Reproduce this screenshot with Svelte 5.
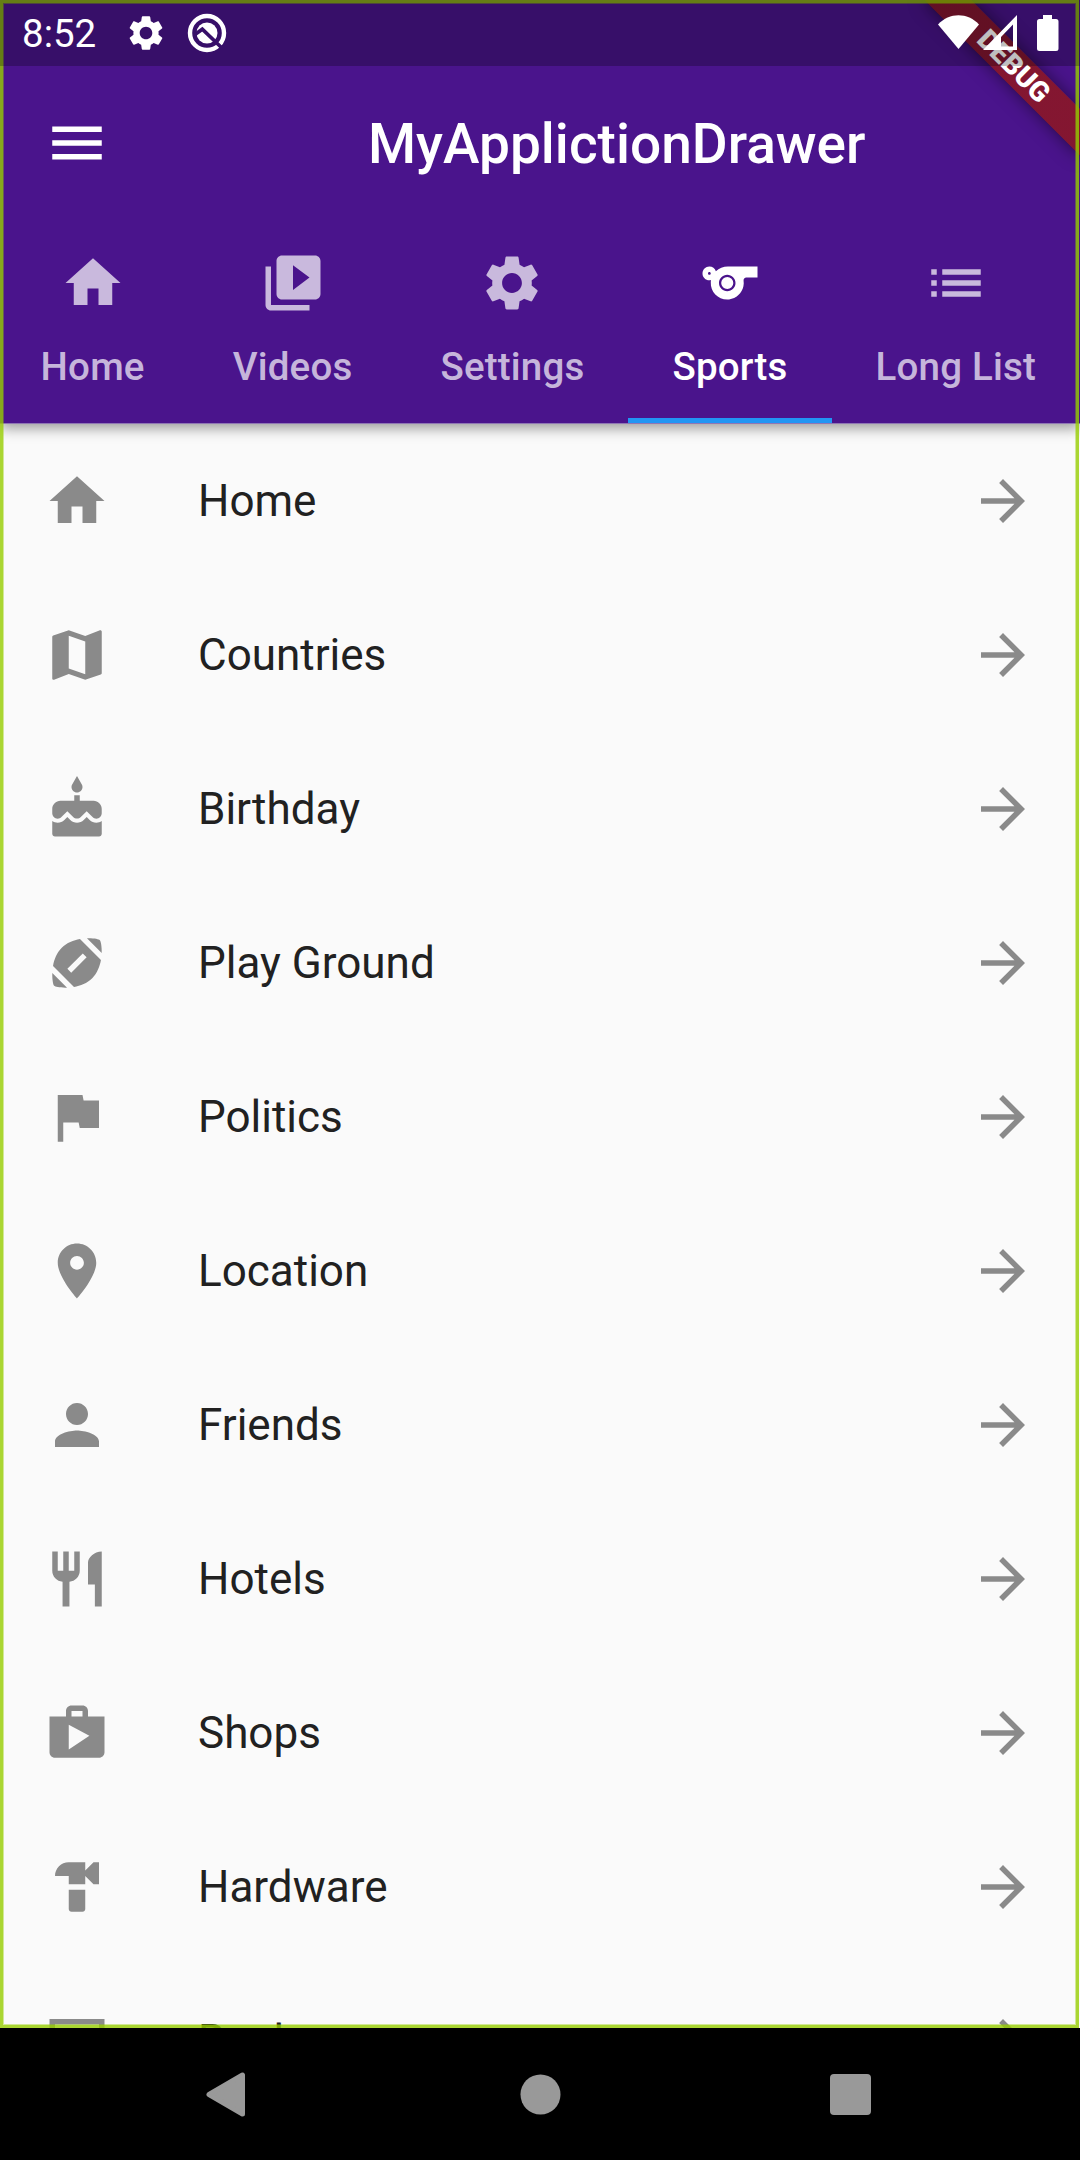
<script>
  const gear =
    'M19.14 12.94c.04-.3.06-.61.06-.94 0-.32-.02-.64-.07-.94l2.03-1.58c.18-.14.23-.41.12-.61l-1.92-3.32c-.12-.22-.37-.29-.59-.22l-2.39.96c-.5-.38-1.03-.7-1.62-.94l-.36-2.54c-.04-.24-.24-.41-.48-.41h-3.84c-.24 0-.43.17-.47.41l-.36 2.54c-.59.24-1.13.57-1.62.94l-2.39-.96c-.22-.08-.47 0-.59.22L2.74 8.87c-.12.21-.08.47.12.61l2.03 1.58c-.05.3-.09.63-.09.94s.02.64.07.94l-2.03 1.58c-.18.14-.23.41-.12.61l1.92 3.32c.12.22.37.29.59.22l2.39-.96c.5.38 1.03.7 1.62.94l.36 2.54c.05.24.24.41.48.41h3.84c.24 0 .44-.17.47-.41l.36-2.54c.59-.24 1.13-.56 1.62-.94l2.39.96c.22.08.47 0 .59-.22l1.92-3.32c.12-.22.07-.47-.12-.61l-2.01-1.58zM12 15.6c-1.98 0-3.6-1.62-3.6-3.6s1.62-3.6 3.6-3.6 3.6 1.62 3.6 3.6-1.62 3.6-3.6 3.6z';
  const house = 'M10 20v-6h4v6h5v-8h3L12 3 2 12h3v8z';
  const arrow = 'M12 4l-1.41 1.41L16.17 11H4v2h12.17l-5.58 5.59L12 20l8-8z';

  const tabs = [
    { label: 'Home', icon: house },
    {
      label: 'Videos',
      icon: 'M4 6H2v14c0 1.1.9 2 2 2h14v-2H4V6zm16-4H8c-1.1 0-2 .9-2 2v12c0 1.1.9 2 2 2h12c1.1 0 2-.9 2-2V4c0-1.1-.9-2-2-2zm-8 12.5v-9l6 4.5-6 4.5z'
    },
    { label: 'Settings', icon: gear },
    {
      label: 'Sports',
      active: true,
      icon: 'M11.23 6c-1.66 0-3.22.66-4.36 1.73C6.54 6.73 5.61 6 4.5 6 3.12 6 2 7.12 2 8.5S3.12 11 4.5 11c.21 0 .41-.03.61-.08-.05.25-.09.51-.1.78-.18 3.68 2.95 6.68 6.68 6.27 2.55-.28 4.68-2.26 5.19-4.77.15-.71.15-1.4.06-2.06-.09-.6.38-1.13.99-1.13H22V6H11.23zM4.5 9c-.28 0-.5-.22-.5-.5s.22-.5.5-.5.5.22.5.5-.22.5-.5.5zm6.5 6c-1.66 0-3-1.34-3-3s1.34-3 3-3 3 1.34 3 3-1.34 3-3 3zM13.200 12a2.200 2.200 0 1 1-4.400 0a2.200 2.200 0 1 1 4.400 0z'
    },
    {
      label: 'Long List',
      icon: 'M3 13h2v-2H3v2zm0 4h2v-2H3v2zm0-8h2V7H3v2zm4 4h14v-2H7v2zm0 4h14v-2H7v2zM7 7v2h14V7H7z'
    }
  ];

  const rows = [
    { label: 'Home', icon: house },
    {
      label: 'Countries',
      icon: 'M20.5 3l-.16.03L15 5.1 9 3 3.36 4.9c-.21.07-.36.25-.36.48V20.5c0 .28.22.5.5.5l.16-.03L9 18.9l6 2.1 5.64-1.9c.21-.07.36-.25.36-.48V3.5c0-.28-.22-.5-.5-.5zM15 19l-6-2.11V5l6 2.11V19z'
    },
    {
      label: 'Birthday',
      icon: 'M12 6c1.11 0 2-.9 2-2 0-.38-.1-.73-.29-1.03L12 0l-1.71 2.97c-.19.3-.29.65-.29 1.03 0 1.1.9 2 2 2zm4.6 9.99l-1.07-1.07-1.08 1.07c-1.3 1.3-3.58 1.31-4.89 0l-1.07-1.07-1.09 1.07C6.75 16.64 5.88 17 4.96 17c-.73 0-1.4-.23-1.96-.61V21c0 .55.45 1 1 1h16c.55 0 1-.45 1-1v-4.61c-.56.38-1.23.61-1.96.61-.92 0-1.79-.36-2.44-1.01zM18 9h-5V7h-2v2H6c-1.66 0-3 1.34-3 3v1.54c0 1.08.88 1.96 1.96 1.96.52 0 1.02-.2 1.38-.57l2.14-2.13 2.13 2.13c.74.74 2.03.74 2.77 0l2.14-2.13 2.13 2.13c.37.37.86.57 1.38.57 1.08 0 1.96-.88 1.96-1.96V12C21 10.34 19.66 9 18 9z'
    },
    {
      label: 'Play Ground',
      icon: 'M3.02 15.62c-.08 2.42.32 4.34.67 4.69s2.28.76 4.69.67l-5.36-5.36zM13.08 3.28c-2.33.42-4.79 1.34-6.62 3.18s-2.76 4.29-3.18 6.62l7.63 7.63c2.34-.41 4.79-1.34 6.62-3.18s2.76-4.29 3.18-6.62l-7.63-7.63zM9.9 15.5l-1.4-1.4 5.6-5.6 1.4 1.4-5.6 5.6zM20.98 8.38c.08-2.42-.32-4.34-.67-4.69s-2.28-.76-4.69-.67l5.36 5.36z'
    },
    { label: 'Politics', icon: 'M14.4 6L14 4H5v17h2v-7h5.6l.4 2h7V6z' },
    {
      label: 'Location',
      icon: 'M12 2C8.13 2 5 5.13 5 9c0 5.25 7 13 7 13s7-7.75 7-13c0-3.87-3.13-7-7-7zm0 9.5c-1.38 0-2.5-1.12-2.5-2.5s1.12-2.5 2.5-2.5 2.5 1.12 2.5 2.5-1.12 2.5-2.5 2.5z'
    },
    {
      label: 'Friends',
      icon: 'M12 12c2.21 0 4-1.79 4-4s-1.79-4-4-4-4 1.79-4 4 1.79 4 4 4zm0 2c-2.67 0-8 1.34-8 4v2h16v-2c0-2.66-5.33-4-8-4z'
    },
    {
      label: 'Hotels',
      icon: 'M11 9H9V2H7v7H5V2H3v7c0 2.12 1.66 3.84 3.75 3.97V22h2.5v-9.03C11.34 12.84 13 11.12 13 9V2h-2v7zm5-3v8h2.5v8H21V2c-2.76 0-5 2.24-5 4z'
    },
    {
      label: 'Shops',
      icon: 'M16 6V4c0-1.11-.89-2-2-2h-4c-1.11 0-2 .89-2 2v2H2v13c0 1.11.89 2 2 2h16c1.11 0 2-.89 2-2V6h-6zm-6-2h4v2h-4V4zM9 18V9l7.5 4L9 18z'
    },
    {
      label: 'Hardware',
      icon: 'M18 3l-3 3V3H9C6.24 3 4 5.24 4 8h5v3h6V8l3 3h2V3h-2zM9 13v7c0 .55.45 1 1 1h4c.55 0 1-.45 1-1v-7H9z'
    },
    { label: 'Bank', icon: 'M2 4h20v16H2zM4 6v12h16V6z' }
  ];
</script>

{#snippet icon(d)}
  <svg class="icon" viewBox="0 0 24 24" aria-hidden="true"><path {d} fill-rule="evenodd" /></svg>
{/snippet}

<div class="phone">
  <div class="app">
    <header>
      <div class="toolbar">
        {@render icon('M3 18h18v-2H3v2zm0-5h18v-2H3v2zm0-7v2h18V6H3z')}
        <h1>MyApplictionDrawer</h1>
      </div>
      <nav class="tabs">
        {#each tabs as tab}
          <div class="tab" class:active={tab.active}>
            {@render icon(tab.icon)}
            <span>{tab.label}</span>
          </div>
        {/each}
      </nav>
    </header>

    <ul>
      {#each rows as row}
        <li>
          {@render icon(row.icon)}
          <span>{row.label}</span>
          {@render icon(arrow)}
        </li>
      {/each}
    </ul>

    <div class="banner">DEBUG</div>
    <div class="frame"></div>

    <div class="status">
      <span class="clock">8:52</span>
      <svg class="gear" viewBox="0 0 24 24"><path d={gear} /></svg>
      <svg class="badge" viewBox="0 0 40 40">
        <mask id="cut">
          <rect width="40" height="40" fill="#fff" />
          <path d="M8 21.500L15.300 16.200L37 37" fill="none" stroke="#000" stroke-width="3.600" />
        </mask>
        <g mask="url(#cut)">
          <circle class="ring" cx="20" cy="20" r="17" />
          <circle cx="20" cy="20" r="10.500" />
        </g>
      </svg>
      <svg class="signals" viewBox="0 0 124 40">
        <path d="M1 11.500C12.500-.8 30.500-.8 42 11.500L21.500 36z" />
        <path d="M46 37L80 2v35zM76 33.500V11.500L64 24v9.500z" fill-rule="evenodd" />
        <path d="M106 2h9v4h4a2.500 2.500 0 0 1 2.500 2.500v27a2.500 2.500 0 0 1-2.500 2.500h-16.500a2.500 2.500 0 0 1-2.500-2.500v-27A2.500 2.500 0 0 1 102.500 6h3.500z" />
      </svg>
    </div>
  </div>

  <footer>
    <svg viewBox="0 0 45 45"><path d="M38.500 3v39L5 22.500z" stroke-width="5" stroke-linejoin="round" /></svg>
    <svg viewBox="0 0 45 45"><circle cx="22.500" cy="22.500" r="20" /></svg>
    <svg viewBox="0 0 45 45"><rect x="2" y="2" width="41" height="41" rx="4" /></svg>
  </footer>
</div>

<style>
  :global(body) {
    margin: 0;
    background: #000;
  }

  .phone {
    width: 1080px;
    height: 2160px;
    display: flex;
    flex-direction: column;
    overflow: hidden;
    background: #000;
    font-family: Roboto, 'Liberation Sans', sans-serif;
  }

  .app {
    position: relative;
    height: 2028px;
    overflow: hidden;
    background: #fafafa;
  }

  .icon {
    width: 66px;
    height: 66px;
    flex: none;
    fill: currentColor;
  }

  header {
    position: relative;
    z-index: 1;
    box-sizing: border-box;
    height: 424px;
    margin-bottom: -0.5px;
    padding-top: 66px;
    border-bottom: 1px solid #8f76b4;
    background: #4a148c;
    color: #fff;
    box-shadow: 0 4px 13px rgba(0, 0, 0, 0.4);
  }

  .toolbar {
    display: flex;
    align-items: center;
    gap: 258px;
    height: 154px;
    padding-left: 44px;
  }

  h1 {
    margin: 0;
    padding-top: 2px;
    font-size: 55px;
    font-weight: 500;
    line-height: 64px;
    white-space: nowrap;
  }

  .tabs {
    display: flex;
    justify-content: flex-end;
    height: 203px;
  }

  .tab {
    flex: none;
    box-sizing: border-box;
    display: flex;
    flex-direction: column;
    align-items: center;
    gap: 28.5px;
    padding: 29.7px 44px 0;
    border-bottom: 5px solid transparent;
    font-size: 38.5px;
    font-weight: 500;
    line-height: 45px;
    letter-spacing: 0.19px;
    white-space: nowrap;
    color: rgba(255, 255, 255, 0.7);
  }

  .tab.active {
    color: #fff;
    border-bottom-color: #2196f3;
  }

  ul {
    margin: 0;
    padding: 0;
    list-style: none;
  }

  li {
    display: flex;
    align-items: center;
    gap: 88px;
    height: 154px;
    padding: 0 44px;
    color: #8a8a8a;
  }

  li span {
    flex: 1;
    font-size: 44px;
    line-height: 52px;
    color: #212121;
  }

  /* Diagonal ribbon over the top right corner */
  .banner {
    position: absolute;
    z-index: 2;
    left: 970px;
    top: 77px;
    width: 220px;
    height: 33px;
    transform-origin: 110px -77px;
    transform: rotate(45deg);
    background:
      linear-gradient(rgba(183, 28, 28, 0.63), rgba(183, 28, 28, 0.63)),
      rgba(0, 0, 0, 0.4);
    box-shadow: 0 0 17px rgba(0, 0, 0, 0.5);
    color: #fff;
    font-size: 28px;
    font-weight: 900;
    line-height: 33px;
    text-align: center;
  }

  .frame {
    position: absolute;
    z-index: 3;
    inset: 0 1px 0 0;
    border: 3px solid rgba(150, 205, 0, 0.8);
    box-shadow: inset 0 0 0 1px rgba(150, 205, 0, 0.4);
  }

  .status {
    position: absolute;
    z-index: 4;
    inset: 0 0 auto;
    box-sizing: border-box;
    height: 66px;
    padding: 0 19px 0 22px;
    display: flex;
    align-items: center;
    background: rgba(0, 0, 0, 0.25);
    color: #fff;
    fill: #fff;
  }

  .clock {
    width: 103px;
    padding-top: 2px;
    font-size: 38.5px;
    line-height: 46px;
  }

  .gear {
    width: 42px;
    height: 42px;
  }

  .badge {
    width: 40px;
    height: 40px;
    margin-left: 20px;
  }

  .ring {
    fill: none;
    stroke: #fff;
    stroke-width: 4.4;
  }

  .signals {
    width: 124px;
    height: 40px;
    margin-left: auto;
  }

  footer {
    height: 132px;
    display: flex;
    align-items: center;
    justify-content: center;
    gap: 265.5px;
    fill: #999;
    stroke: #999;
    stroke-width: 0;
  }

  footer svg {
    width: 45px;
    height: 45px;
  }

  footer svg:first-child {
    margin: 0 3px 0 -3px;
  }
</style>
